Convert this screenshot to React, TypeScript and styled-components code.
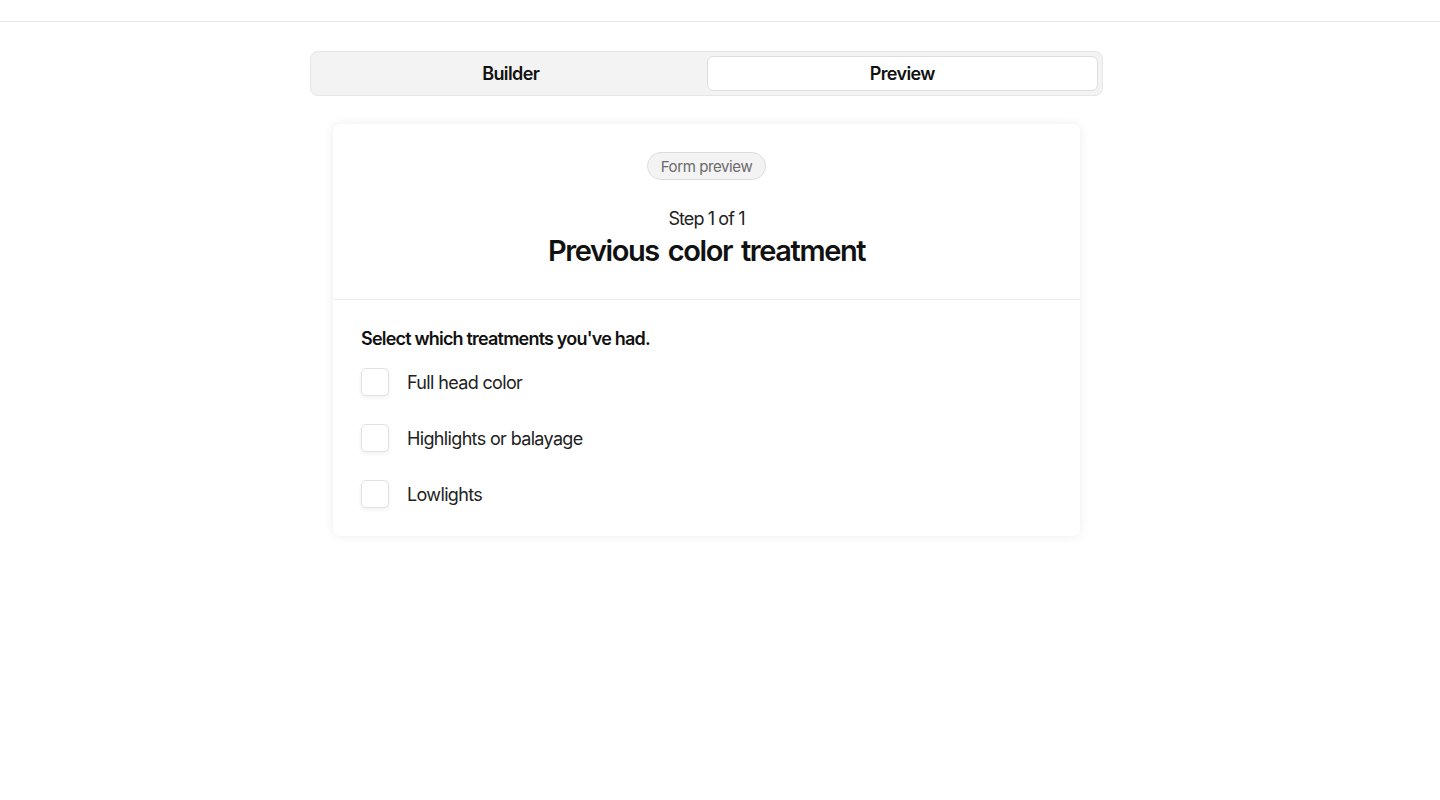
import React, { useState } from 'react';
import styled, { createGlobalStyle } from 'styled-components';

const GlobalStyle = createGlobalStyle`
  html, body {
    margin: 0;
    padding: 0;
    background: #ffffff;
    font-family: Inter, "Noto Sans", "Liberation Sans", sans-serif;
    color: #111111;
  }
  * { box-sizing: border-box; }
`;

// 상단 바
const TopBar = styled.div`
  height: 22px;
  border-bottom: 1px solid #e4e4e4;
`;

const Main = styled.main`
  display: flex;
  justify-content: center;
  padding: 29px 27px 40px 0;
`;

const Column = styled.div`
  width: 793px;
  display: flex;
  flex-direction: column;
  gap: 28px;
`;

// 탭
const Tabs = styled.div`
  display: grid;
  grid-template-columns: 1fr 1fr;
  padding: 4px;
  height: 45px;
  background: #f3f3f3;
  border: 1px solid #e6e6e6;
  border-radius: 8px;
`;

const Tab = styled.button<{ $active?: boolean }>`
  border: ${(p) => (p.$active ? '1px solid #dedede' : '1px solid transparent')};
  background: ${(p) => (p.$active ? '#ffffff' : 'transparent')};
  border-radius: 6px;
  font-family: inherit;
  font-size: 18px;
  font-weight: 600;
  color: #111111;
  cursor: pointer;
  letter-spacing: -0.6px;
`;

// 카드
const Card = styled.section`
  margin: 0 23px;
  background: #ffffff;
  border-radius: 8px;
  box-shadow: 0 0 12px rgba(0, 0, 0, 0.08);
  overflow: hidden;
`;

const CardHeader = styled.div`
  display: flex;
  flex-direction: column;
  align-items: center;
  padding: 28px 20px 29px;
  border-bottom: 1px solid #ececec;
`;

const Badge = styled.span`
  display: inline-flex;
  align-items: center;
  height: 28px;
  padding: 0 13px;
  border-radius: 14px;
  background: #f3f3f3;
  border: 1px solid #dcdcdc;
  font-size: 15px;
  letter-spacing: -0.4px;
  color: #6a6a6a;
`;

const Step = styled.div`
  margin-top: 26px;
  font-size: 18px;
  line-height: 26px;
  letter-spacing: -0.9px;
  color: #222222;
`;

const Title = styled.h1`
  margin: 0;
  font-size: 29px;
  line-height: 38px;
  font-weight: 600;
  letter-spacing: -1.4px;
  word-spacing: 3px;
`;

const CardBody = styled.div`
  padding: 27px 28px 28px;
  display: flex;
  flex-direction: column;
`;

const Question = styled.div`
  font-size: 18px;
  line-height: 24px;
  font-weight: 600;
  letter-spacing: -0.8px;
  margin-bottom: 17px;
`;

const Options = styled.div`
  display: flex;
  flex-direction: column;
  gap: 28px;
`;

const Option = styled.label`
  display: flex;
  align-items: center;
  gap: 18px;
  font-size: 18px;
  letter-spacing: -0.65px;
  color: #222222;
  cursor: pointer;
`;

const Box = styled.span<{ $checked?: boolean }>`
  width: 28px;
  height: 28px;
  flex-shrink: 0;
  border: 1px solid #e2e2e2;
  border-radius: 5px;
  background: ${(p) => (p.$checked ? '#111111' : '#ffffff')};
  box-shadow: 0 2px 4px rgba(0, 0, 0, 0.06);
`;

const options = ['Full head color', 'Highlights or balayage', 'Lowlights'];

export default function App() {
  const [tab, setTab] = useState('preview');
  const [checked, setChecked] = useState<string[]>([]);

  const toggle = (o: string) => {
    setChecked((c) => (c.includes(o) ? c.filter((x) => x !== o) : [...c, o]));
  };

  return (
    <>
      <GlobalStyle />
      <TopBar />
      <Main>
        <Column>
          <Tabs>
            <Tab $active={tab === 'builder'} onClick={() => setTab('builder')}>Builder</Tab>
            <Tab $active={tab === 'preview'} onClick={() => setTab('preview')}>Preview</Tab>
          </Tabs>
          <Card>
            <CardHeader>
              <Badge>Form preview</Badge>
              <Step>Step 1 of 1</Step>
              <Title>Previous color treatment</Title>
            </CardHeader>
            <CardBody>
              <Question>Select which treatments you've had.</Question>
              <Options>
                {options.map((o) => (
                  <Option key={o} onClick={() => toggle(o)}>
                    <Box $checked={checked.includes(o)} />
                    {o}
                  </Option>
                ))}
              </Options>
            </CardBody>
          </Card>
        </Column>
      </Main>
    </>
  );
}
